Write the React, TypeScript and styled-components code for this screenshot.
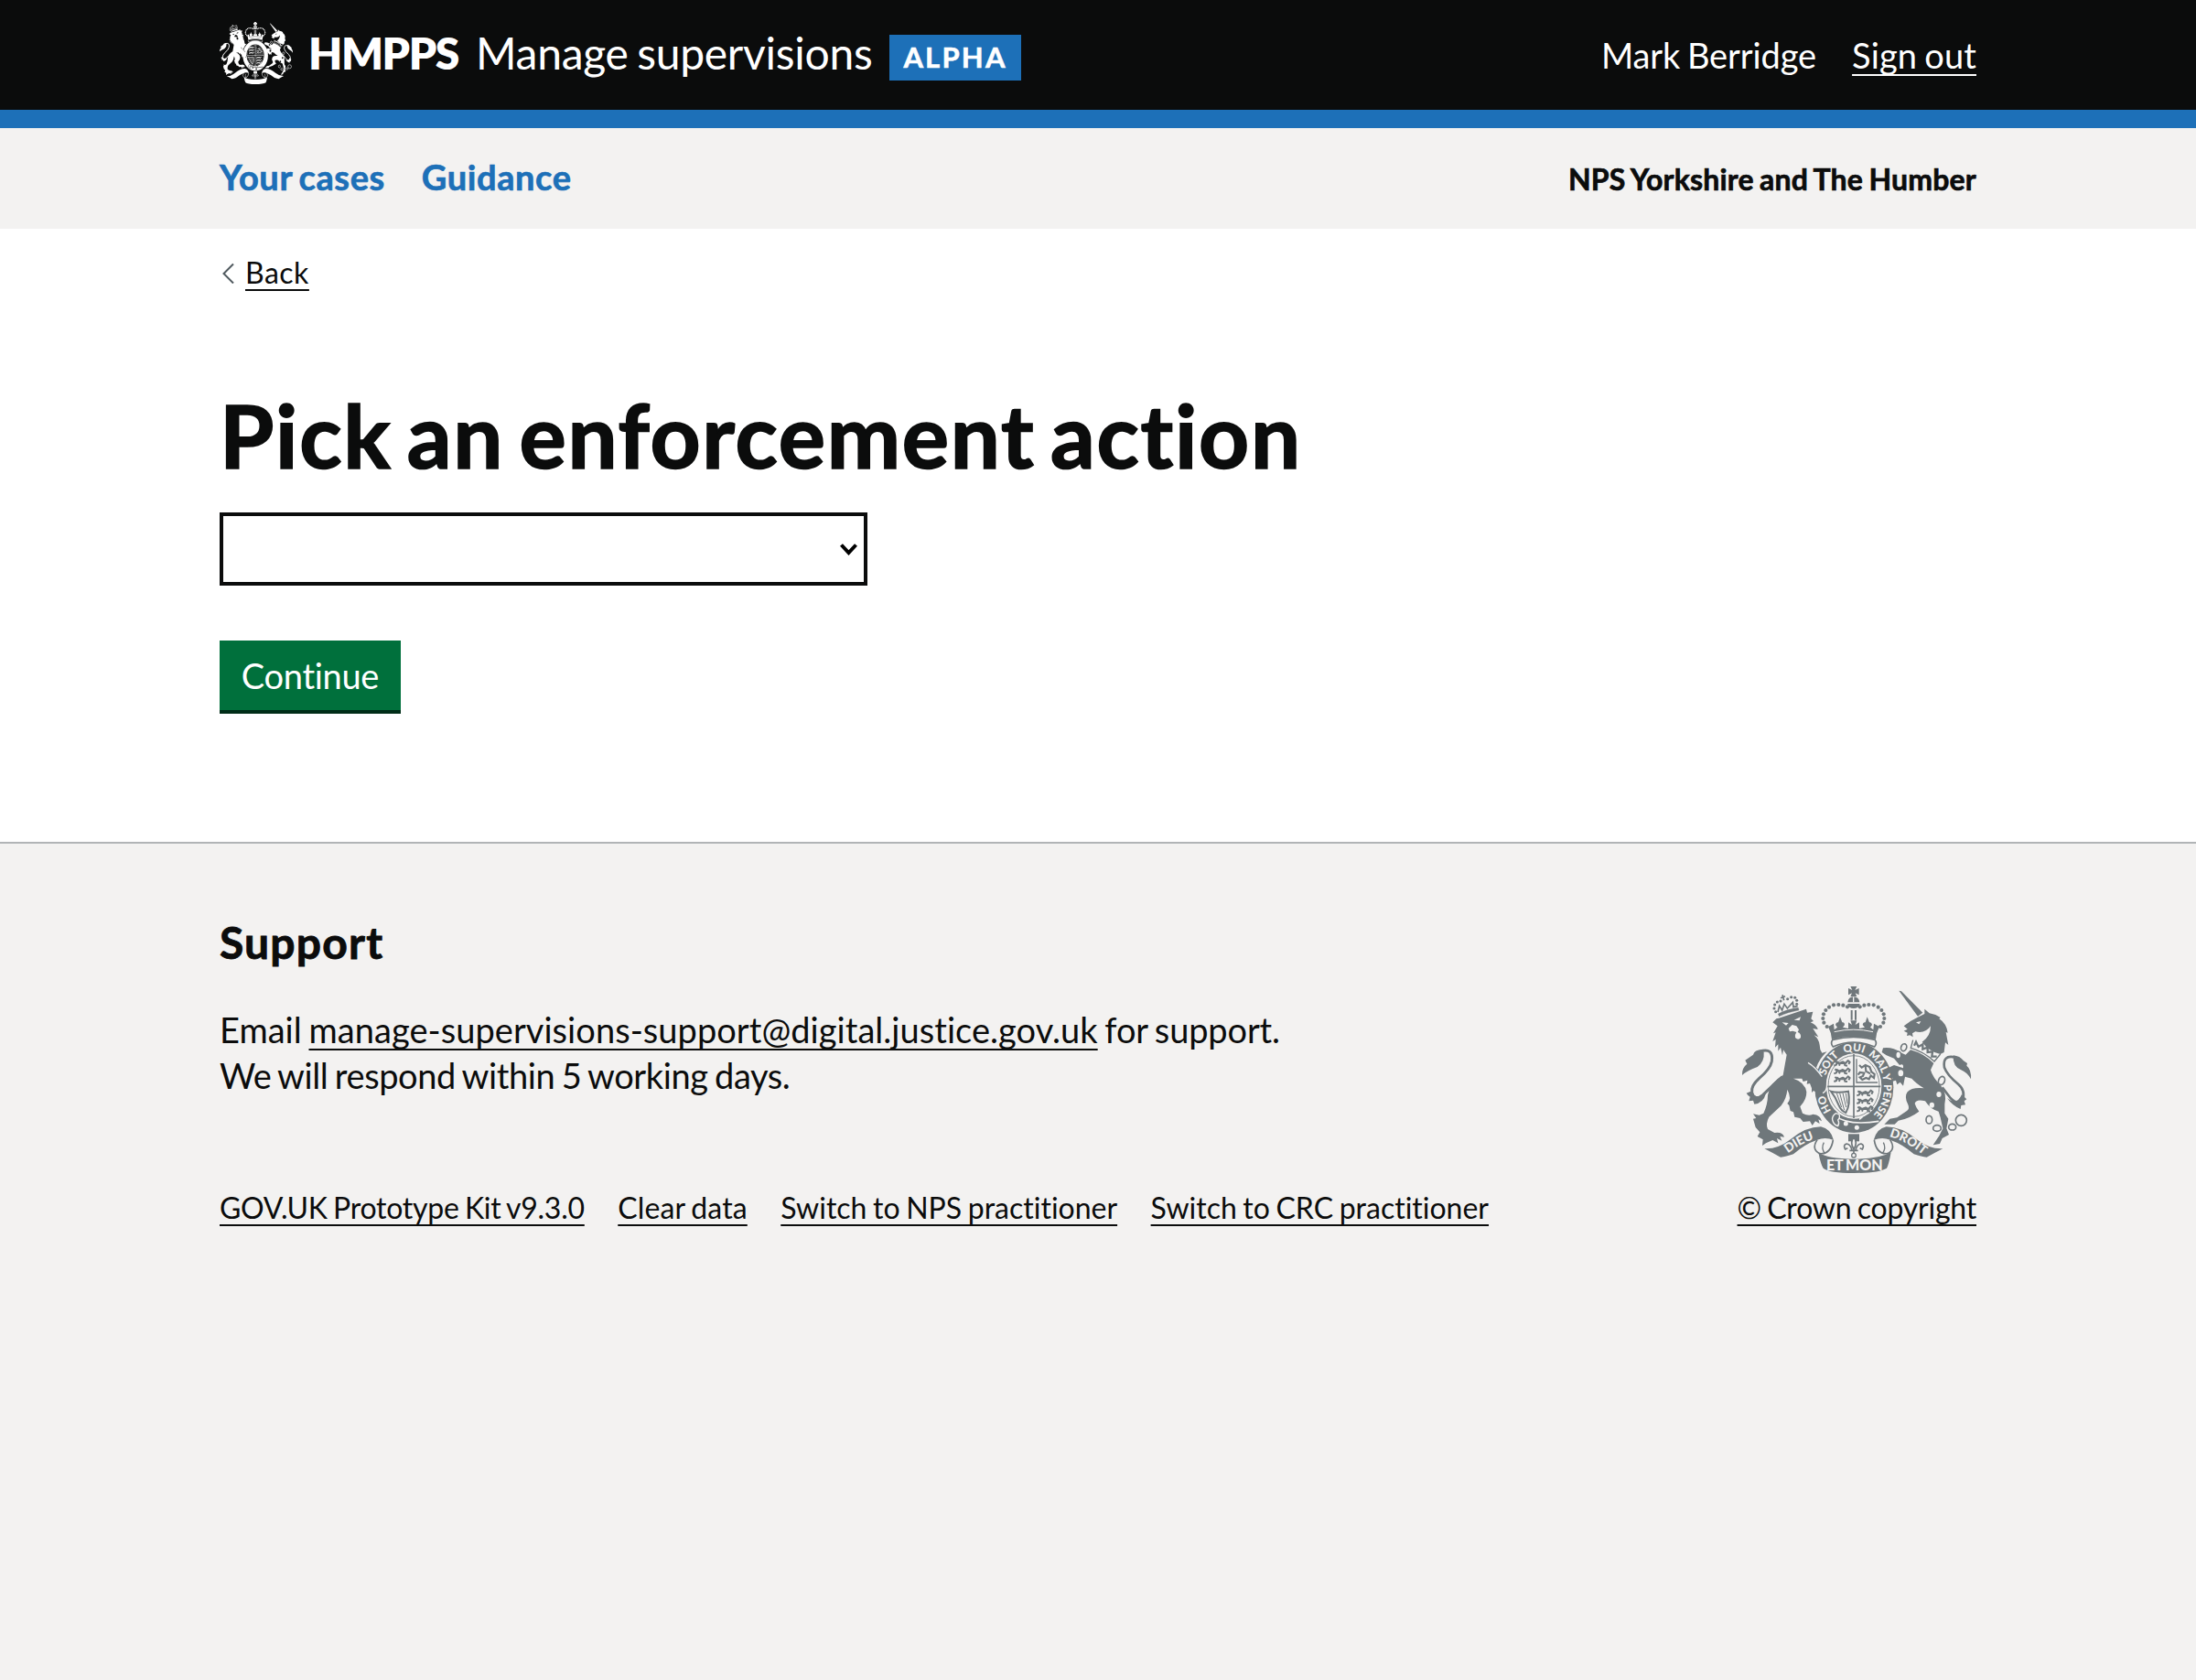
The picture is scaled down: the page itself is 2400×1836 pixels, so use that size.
import React from 'react';
import styled, { createGlobalStyle, css } from 'styled-components';

const INK = '#0b0c0c';
const BLUE = '#1d70b8';
const PALE = '#f3f2f1';
const CREST_GREY = '#6f777b';

const GlobalStyle = createGlobalStyle`
  *, *::before, *::after { box-sizing: border-box; }
  body {
    margin: 0;
    background: ${PALE};
    color: ${INK};
    font-family: Lato, "Noto Sans", sans-serif;
    font-variant-ligatures: none;
  }
`;

const Page = styled.div`
  display: flex;
  flex-direction: column;
  min-height: 1836px;
`;

const Container = styled.div`
  width: 1920px;
  margin: 0 auto;
`;

const tracking = css<{ $track?: number; $gap?: number }>`
  letter-spacing: ${p => p.$track ?? 0}px;
  word-spacing: ${p => p.$gap ?? -0.05}em;
`;

const bold = css`
  font-weight: 700;
  -webkit-text-stroke: 0.018em currentColor;
`;

const Text = styled.span<{ $track?: number; $gap?: number }>`
  ${tracking}
  white-space: pre;
`;

const Link = styled.a<{ $track?: number; $gap?: number }>`
  ${tracking}
  color: inherit;
  white-space: nowrap;
  text-decoration: underline;
  text-decoration-thickness: 2px;
  text-underline-offset: 6px;
  text-decoration-skip-ink: none;
`;

const Header = styled.header`
  height: 140px;
  background: ${INK};
  border-bottom: 20px solid ${BLUE};
  color: #fff;
`;

const HeaderRow = styled(Container)`
  display: flex;
  height: 120px;
`;

const HeaderCrest = styled.div`
  width: 80px;
  padding-top: 24px;
`;

const Organisation = styled.div`
  width: 164px;
  margin-left: 17px;
  font-size: 48px;
  font-weight: 800;
  line-height: 115px;
`;

const ServiceName = styled.div`
  width: 434px;
  margin-left: 19px;
  font-size: 48px;
  line-height: 115px;
`;

const PhaseTag = styled.div`
  width: 144px;
  height: 50px;
  margin: 38px 0 0 18px;
  background: ${BLUE};
  font-size: 31px;
  line-height: 48px;
  text-align: center;
  ${bold}
`;

const Account = styled.div`
  display: flex;
  gap: 39px;
  margin-left: auto;
  font-size: 38px;
  line-height: 120px;
`;

const SubNav = styled.nav`
  height: 110px;
  background: ${PALE};
`;

const SubNavRow = styled(Container)`
  display: flex;
  gap: 40px;
  font-size: 38px;
  line-height: 107px;
  ${bold}
`;

const NavLink = styled.a<{ $track?: number; $gap?: number }>`
  ${tracking}
  color: ${BLUE};
  text-decoration: none;
`;

const Region = styled.div`
  margin-left: auto;
  font-size: 32px;
  line-height: 111px;
`;

const Main = styled.main`
  height: 670px;
  background: #fff;
`;

const BackRow = styled.div`
  display: flex;
  align-items: center;
  gap: 12px;
  height: 40px;
  padding: 0 0 0 3px;
  font-size: 32px;
  line-height: 40px;
`;

const MainColumn = styled(Container)`
  padding-top: 28px;
`;

const Heading = styled.h1`
  margin: 107px 0 0;
  font-size: 96px;
  line-height: 100px;
  ${bold}
`;

const SelectBox = styled.div`
  display: flex;
  align-items: center;
  justify-content: flex-end;
  width: 708px;
  height: 80px;
  margin-top: 35px;
  padding-right: 7px;
  border: 4px solid ${INK};
  background: #fff;
`;

const Button = styled.button`
  display: block;
  width: 198px;
  height: 80px;
  margin-top: 60px;
  padding: 0 0 4px;
  border: 0;
  background: #00703c;
  box-shadow: inset 0 -4px 0 #002d18;
  color: #fff;
  font: 400 38px/74px Lato, sans-serif;
  font-variant-ligatures: none;
`;

const Footer = styled.footer`
  flex: 1;
  border-top: 2px solid #b1b4b6;
  background: ${PALE};
`;

const FooterRow = styled(Container)`
  display: flex;
  justify-content: space-between;
  align-items: flex-end;
  padding-top: 77px;
`;

const SupportTitle = styled.h2`
  margin: 0;
  font-size: 48px;
  line-height: 62px;
  ${bold}
`;

const SupportText = styled.p`
  margin: 39px 0 100px;
  font-size: 38px;
  line-height: 50px;
`;

const smallText = css`
  font-size: 32px;
  line-height: 40px;
`;

const MetaLinks = styled.div`
  display: flex;
  gap: 36.5px;
  ${smallText}
`;

const Copyright = styled.div`
  display: flex;
  flex-direction: column;
  align-items: flex-end;
  gap: 18px;
  ${smallText}
`;

const CopyrightCrest = styled.div`
  padding-right: 6px;
  height: 204px;
`;

const CrestSvg = styled.svg`
  display: block;
  overflow: visible;
  font-family: Lato, sans-serif;
  font-weight: 900;
`;

const LEFT_PEARLS: [number, number][] = [
  [417, 121], [403, 116], [388, 114], [372, 115], [357, 122], [346, 132],
  [339, 145], [337, 159], [340, 173], [350, 186],
];

const LION_PEARLS: [number, number][] = [
  [182, 137], [177, 126], [179, 114], [187, 105], [198, 102],
  [221, 95], [233, 89], [245, 91], [251, 100], [251, 112],
];

function Ribbon({ ink }: { ink: string }) {
  return (
    <>
      <path d="M145 586Q190 588 230 556Q280 514 330 514Q362 520 372 558Q345 546 318 557Q275 572 240 604Q215 613 198 614Q172 600 145 586Z" fill={ink} />
      <path d="M318 557Q298 588 326 602Q362 606 370 558" fill="none" stroke={ink} strokeWidth="5" />
      <path d="M340 566Q330 584 343 602" fill="none" stroke={ink} strokeWidth="4" />
    </>
  );
}

function Lions({ x, y }: { x: number; y: number }) {
  return (
    <g transform={`translate(${x} ${y})`} fill="none" strokeWidth="6" strokeLinejoin="round">
      {[0, 26, 52].map(dy => (
        <path key={dy} d={`M2 ${dy + 18}l8-3 2-10 7 5 12-5 9 5 8-9 6 5-4 7M12 ${dy + 8}l-7-5M22 ${dy + 9}l-3 9M36 ${dy + 8}l2 9 8 1M14 ${dy + 10}h24`} />
      ))}
    </g>
  );
}

interface CrestProps {
  ink: string;
  ground: string;
  width: number;
  height: number;
  motto?: boolean;
}

function Crest({ ink, ground, width, height, motto }: CrestProps) {
  return (
    <CrestSvg width={width} height={height} viewBox="72 54 750 612" preserveAspectRatio="none" aria-hidden="true">
      {/* garter and shield */}
      <ellipse cx="439" cy="385" rx="129" ry="149" fill={ink} />
      <ellipse cx="438" cy="381" rx="91" ry="107" fill={ground} />
      <g stroke={ink}>
        <ellipse cx="438" cy="381" rx="84" ry="100" fill="none" strokeWidth="2.5" />
        <path d="M350 382H526M438 276V486" strokeWidth="5" />
        <Lions x={371} y={296} />
        <Lions x={446} y={394} />
        <path d="M447 292V369H516" fill="none" strokeWidth="4" />
        <path d="M456 312l8 8 12-8 14 6 6 16 10 8-2 12-10-8-6 12-10-4-12 6-8-8 10-4 4-10-14-2-6 8M476 312l2 20 14 8" fill="none" strokeWidth="6.5" />
        <path d="M363 398Q384 404 420 398Q428 440 412 468Q396 462 388 442Q380 420 363 398Z" fill="none" strokeWidth="6" />
        <path d="M382 404L398 450M392 404L407 460M402 404L413 450M412 404L417 438" strokeWidth="3" />
      </g>
      {/* garter strap and buckle */}
      <path d="M376 478Q420 512 520 496" fill="none" stroke={ground} strokeWidth="5" />
      <path d="M380 470Q366 478 368 492Q372 508 386 512Q392 502 386 492Q394 484 390 474Z" fill={ink} stroke={ground} strokeWidth="4" />
      <circle cx="412" cy="504" r="7.5" fill={ground} />
      <circle cx="448" cy="517" r="7.5" fill={ground} />
      <path d="M456 490L466 482" stroke={ground} strokeWidth="5" />

      {/* royal crown */}
      <path d="M427 54H448L442 66L455 60V82L443 76L448 87H427L432 76L420 82V60L433 66Z" fill={ink} />
      <path d="M418 106Q420 88 437 88Q455 88 457 106Z" fill={ink} />
      <path d="M417 111H458Q454 126 437 126Q421 126 417 111Z" fill={ink} />
      <path d="M437 88V106" stroke={ground} strokeWidth="4" />
      <path d="M431 132V164M444 132V164" stroke={ink} strokeWidth="6" />
      {LEFT_PEARLS.map(([x, y]) => (
        <React.Fragment key={`${x}-${y}`}>
          <circle cx={x} cy={y} r="6.2" fill={ink} />
          <circle cx={875 - x} cy={y} r="6.2" fill={ink} />
        </React.Fragment>
      ))}
      <path d="M354 186L372 176L374 196L384 188L378 180Q380 170 387 172L393 154L400 172Q408 170 408 180L402 188L420 192L432 184L420 196V172L432 180L427 166H448L443 180L456 172V196L443 184L456 192L474 188L467 180Q468 170 476 172L482 154L489 172Q496 170 498 180L492 188L502 196L504 176L522 186Q512 204 510 228Q437 210 366 228Q364 204 354 186Z" fill={ink} />
      <path d="M374 203Q437 188 501 203" fill="none" stroke={ground} strokeWidth="3" />
      <path d="M369 229Q437 212 507 229Q516 240 506 252Q437 222 370 252Q360 240 369 229Z" fill={ground} stroke={ink} strokeWidth="5" />

      {/* lion */}
      <path d="M128 268Q176 252 169 300Q164 325 128 355Q100 380 104 402Q112 432 140 410Q160 390 204 350" fill="none" stroke={ink} strokeWidth="9" />
      <path d="M138 261Q112 262 108 278L82 296L88 308Q70 322 72 345Q88 330 122 318Q146 300 143 270Z" fill={ink} />
      <path d="M100 398L86 404Q92 414 98 416L94 430L108 428L112 440Q142 436 150 404Q120 428 100 398Z" fill={ink} />
      <path d="M172 172L184 160L192 158L282 128L285 140L304 137L298 160L306 168L296 172Q316 180 320 195L304 192L322 220L308 214Q324 228 326 246Q326 262 334 272L350 268Q326 290 315 320Q340 345 346 372L350 406L340 400L342 414L330 404L322 414L316 402L306 396L300 402L300 388L294 372L284 374L286 362L272 366L268 356L240 356Q278 368 283 400Q284 425 262 448L270 470Q290 480 304 473Q330 476 333 496L322 490L326 504L312 496L302 510L294 496L272 498L262 486L244 482L240 466L230 462L226 444L220 438Q236 422 220 392Q218 420 200 445L160 482Q148 505 156 522L178 534Q205 530 210 548L196 546L202 560L186 552L190 568L172 558L150 568L138 576L140 556L122 546L130 532L116 516L108 488L118 486L108 472L128 476L142 470Q156 440 156 410Q162 370 206 345Q214 300 218 278L207 262L204 280L198 254L190 266L190 244L180 254L182 228L172 234L182 205L174 208L188 184Z" fill={ink} />
      <path d="M288 304Q312 318 334 350M336 404Q350 398 350 376" fill="none" stroke={ground} strokeWidth="4" />
      <path d="M203 172L224 174L216 182ZM242 164L264 154L260 166Z" fill={ground} />
      <path d="M224 192L236 180L250 184L258 196L254 204Q266 208 264 222Q256 232 246 222Q244 212 250 204L238 200L228 202Z" fill={ground} />
      <g stroke={ink} fill={ink}>
        <path d="M190 144Q220 128 256 124L258 132Q222 138 193 152Z" strokeWidth="1" />
        <path d="M189 138L194 118L203 132L210 112L220 126L238 106L240 122L254 118" fill="none" strokeWidth="5" />
        <path d="M198 92L213 86M204 82L209 100" strokeWidth="5" />
        {LION_PEARLS.map(([x, y]) => <circle key={`${x}-${y}`} cx={x} cy={y} r="4.6" stroke="none" />)}
      </g>

      {/* unicorn */}
      <path d="M586 68L594 70L664 140L648 152Z" fill={ink} />
      <path d="M602 184L624 168L646 156L670 144L670 128L686 142Q708 146 722 156L718 160Q742 176 746 206L740 204L748 246L738 238L734 270L722 276Q684 268 662 236Q690 218 690 184Q672 210 640 202L630 208L632 220L622 214L612 216L614 206L602 200L614 194Z" fill={ink} />
      <path d="M642 172L658 168L652 178Z" fill={ground} />
      <path d="M632 230L625 256Q668 268 702 300L722 276" fill="none" stroke={ink} strokeWidth="4" />
      <path d="M636 248L642 236L650 252L664 244L664 260L680 254L680 270L696 268L694 284L710 284" fill="none" stroke={ink} strokeWidth="7" />
      <path d="M624 262Q668 274 700 306L690 328Q696 352 724 380Q744 405 736 440L736 470L748 488L742 520L750 540L728 552L720 570L698 574L718 544L730 520L722 484L716 464Q690 458 672 430Q642 422 638 438Q642 452 652 464Q620 488 584 494L572 506L538 506L556 488L580 484L612 462Q622 456 616 442Q602 416 614 400Q628 384 668 388Q640 370 628 356L606 350L600 380L590 368L580 376L576 362L562 366L566 354L552 350Q558 336 550 322L570 312L600 322Q602 304 588 312L570 290L545 280L530 270L534 256Q566 252 590 270L608 278Z" fill={ink} />
      <path d="M768 286Q728 278 735 320Q744 345 780 374Q806 395 794 430Q778 444 755 420L728 385" fill="none" stroke={ink} strokeWidth="8" />
      <path d="M764 280Q786 282 798 298L810 306L808 314Q824 326 822 358Q810 336 790 328Q762 318 764 280Z" fill={ink} />
      <path d="M792 408L808 424L800 430L804 442L790 444L788 456Q762 446 744 420Q776 446 792 408Z" fill={ink} />

      {/* chain */}
      <g fill={ground} stroke={ink} strokeWidth="5">
        <ellipse cx="602" cy="254" rx="9" ry="12" transform="rotate(20 602 254)" />
        <ellipse cx="584" cy="279" rx="9" ry="12" />
        <ellipse cx="592" cy="338" rx="11" ry="13" />
        <ellipse cx="726" cy="363" rx="10" ry="14" transform="rotate(20 726 363)" />
        <ellipse cx="685" cy="491" rx="10" ry="13" />
        <ellipse cx="711" cy="519" rx="13" ry="10" />
        <ellipse cx="761" cy="515" rx="12" ry="10" />
        <circle cx="790" cy="493" r="18" />
      </g>
      <ellipse cx="717" cy="408" rx="8" ry="9" fill={ground} />
      <ellipse cx="694" cy="443" rx="8" ry="9" fill={ground} />

      {/* ribbon and fleur-de-lis */}
      <Ribbon ink={ink} />
      <g transform="matrix(-1 0 0 1 875 0)"><Ribbon ink={ink} /></g>
      <path d="M322 598Q352 620 438 620Q522 620 560 598Q554 634 546 650Q520 666 438 666Q358 666 338 650Q328 634 322 598Z" fill={ink} />
      <path d="M420 538H456V562H420Z" fill={ink} />
      <path d="M438 548Q424 566 438 588Q452 566 438 548ZM432 590Q426 570 414 570Q402 574 410 588L418 584M444 590Q450 570 462 570Q474 574 466 588L458 584M424 592H452M438 594V608" fill={ground} stroke={ink} strokeWidth="5" />
      <circle cx="438" cy="608" r="7" fill={ground} stroke={ink} strokeWidth="4" />

      {motto && (
        <g fill={ground} textAnchor="middle">
          <defs>
            <path id="garter-line" d="M368.7 467A98 118 0 1 1 463 499" />
            <path id="ribbon-left" d="M212 610Q262 566 326 550" />
            <path id="ribbon-right" d="M546 545Q604 556 672 612" />
          </defs>
          <g fontSize="35">
            <text><textPath href="#garter-line" startOffset="6%">HO</textPath></text>
            <text><textPath href="#garter-line" startOffset="29%">SOIT</textPath></text>
            <text><textPath href="#garter-line" startOffset="45%">QUI</textPath></text>
            <text><textPath href="#garter-line" startOffset="60%">MAL</textPath></text>
            <text><textPath href="#garter-line" startOffset="69.5%">Y</textPath></text>
            <text><textPath href="#garter-line" startOffset="82.5%">PENSE</textPath></text>
          </g>
          <g fontSize="41">
            <text><textPath href="#ribbon-left" startOffset="48%">DIEU</textPath></text>
            <text><textPath href="#ribbon-right" startOffset="50%">DROIT</textPath></text>
          </g>
          <g fontSize="48">
            <text x="376" y="657">ET</text>
            <text x="472" y="657">MON</text>
          </g>
        </g>
      )}
    </CrestSvg>
  );
}

export default function App() {
  return (
    <>
      <GlobalStyle />
      <Page>
        <Header>
          <HeaderRow>
            <HeaderCrest><Crest ink="#fff" ground={INK} width={80} height={68} /></HeaderCrest>
            <Organisation><Text $track={-1.4}>HMPPS</Text></Organisation>
            <ServiceName><Text $track={-0.28}>Manage supervisions</Text></ServiceName>
            <PhaseTag><Text $track={2.2}>ALPHA</Text></PhaseTag>
            <Account>
              <Text $track={-0.1}>Mark Berridge</Text>
              <Link $track={0.15}>Sign out</Link>
            </Account>
          </HeaderRow>
        </Header>
        <SubNav>
          <SubNavRow>
            <NavLink $track={0.6} $gap={-0.07}>Your cases</NavLink>
            <NavLink $track={0.6}>Guidance</NavLink>
            <Region><Text $track={0.19}>NPS Yorkshire and The Humber</Text></Region>
          </SubNavRow>
        </SubNav>
        <Main>
          <MainColumn>
            <BackRow>
              <svg width="13" height="24" viewBox="0 0 13 24"><path d="M12 2.5L1.5 13L12 23.5" fill="none" stroke="#505a5f" strokeWidth="2" /></svg>
              <Link $track={0.5}>Back</Link>
            </BackRow>
            <Heading><Text $track={1.75} $gap={-0.09}>Pick an enforcement action</Text></Heading>
            <SelectBox>
              <svg width="19" height="13" viewBox="0 0 19 13"><path d="M1.5 1.5L9.5 10L17.5 1.5" fill="none" stroke="#000" strokeWidth="4" /></svg>
            </SelectBox>
            <Button><Text $track={-0.3}>Continue</Text></Button>
          </MainColumn>
        </Main>
        <Footer>
          <FooterRow>
            <div>
              <SupportTitle><Text $track={1.2}>Support</Text></SupportTitle>
              <SupportText>
                <Text>Email </Text>
                <Link $track={0.05}>manage-supervisions-support@digital.justice.gov.uk</Link>
                <Text $track={-0.15}> for support.</Text>
                <br />
                <Text $track={-0.4}>We will respond within 5 working days.</Text>
              </SupportText>
              <MetaLinks>
                <Link $track={-0.26}>GOV.UK Prototype Kit v9.3.0</Link>
                <Link $track={0.12}>Clear data</Link>
                <Link>Switch to NPS practitioner</Link>
                <Link>Switch to CRC practitioner</Link>
              </MetaLinks>
            </div>
            <Copyright>
              <CopyrightCrest><Crest ink={CREST_GREY} ground={PALE} width={250} height={204} motto /></CopyrightCrest>
              <Link $track={-0.22}>© Crown copyright</Link>
            </Copyright>
          </FooterRow>
        </Footer>
      </Page>
    </>
  );
}
